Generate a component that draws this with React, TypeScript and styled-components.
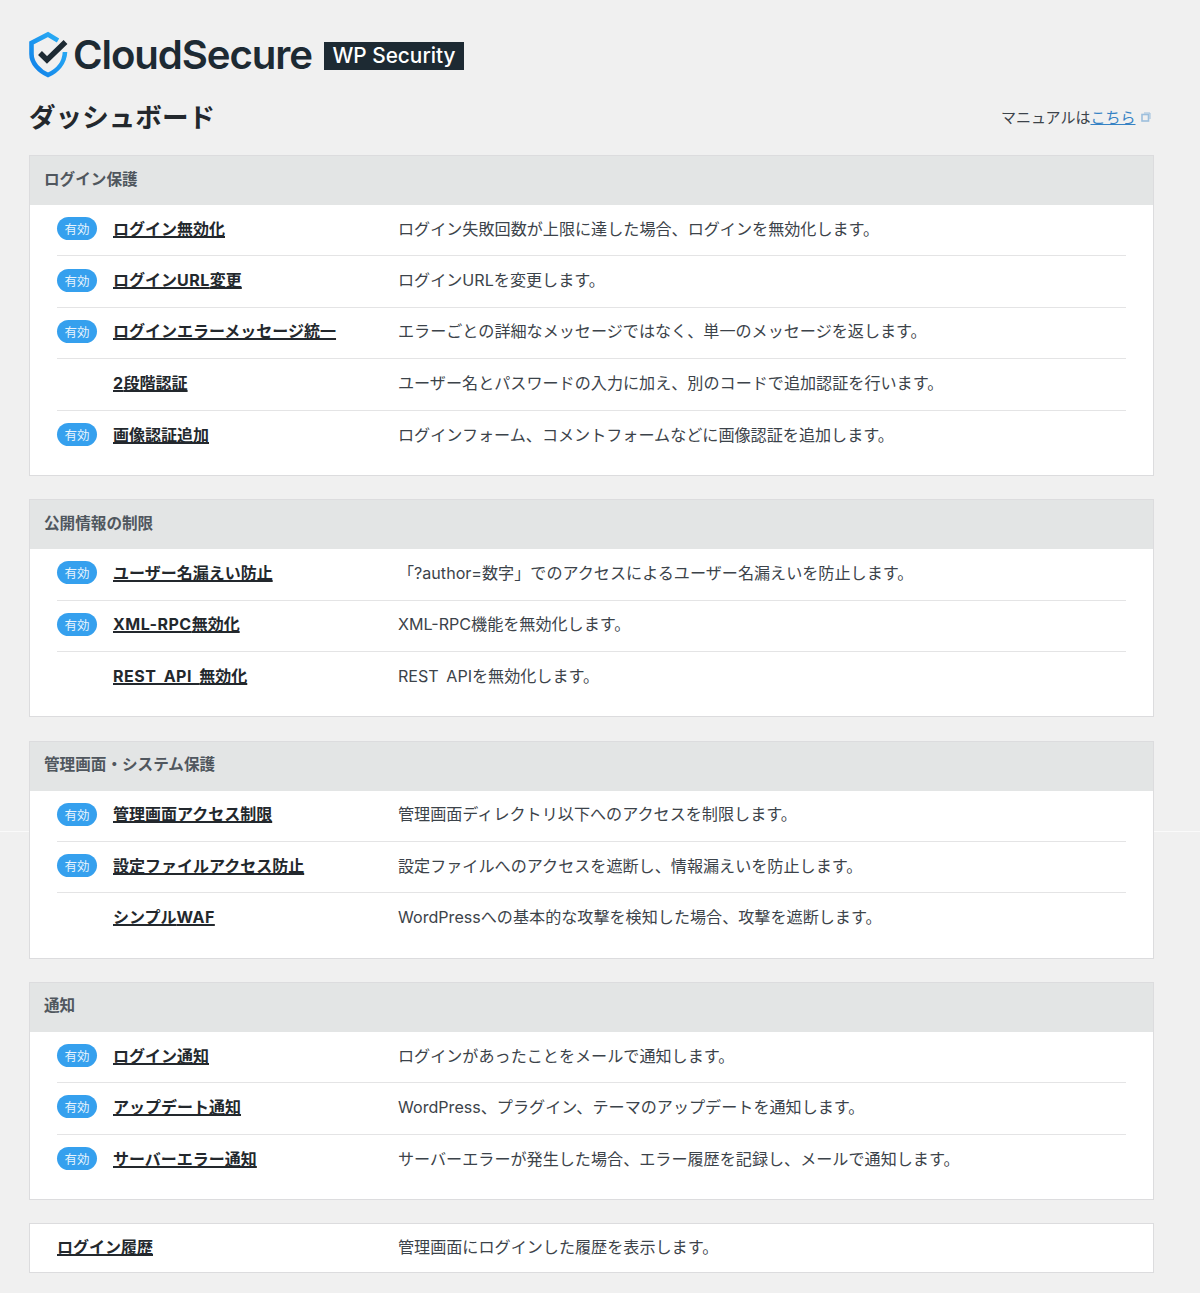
import React from "react";
import styled, { createGlobalStyle } from "styled-components";

const GlobalStyle = createGlobalStyle`
	html, body {
		margin: 0;
		padding: 0;
	}
	body {
		background-color: #f0f0f0;
		background-image: linear-gradient(#fafafa, #fafafa);
		background-size: 100% 1px;
		background-position: 0 831px;
		background-repeat: no-repeat;
		color: #2c3338;
		font-family: Inter, "Noto Sans CJK JP", sans-serif;
	}
`;

const Page = styled.div`
	box-sizing: border-box;
	width: 1200px;
	height: 1293px;
	padding: 30px 46px 0 29px;
	overflow: hidden;
`;

const LogoRow = styled.div`
	display: flex;
	align-items: center;
	height: 48px;
`;

const LogoName = styled.span`
	margin-left: 4px;
	font-family: Inter, sans-serif;
	font-size: 40.2px;
	font-weight: 600;
	letter-spacing: -1.1px;
	color: #1d2a33;
`;

const LogoTag = styled.span`
	display: flex;
	align-items: center;
	justify-content: center;
	width: 140px;
	height: 28px;
	margin-left: 12px;
	margin-top: 3px;
	background: #1d2a33;
	color: #fff;
	font-family: Inter, sans-serif;
	font-size: 20.8px;
	font-weight: 500;
`;

const TitleRow = styled.div`
	display: flex;
	align-items: center;
	justify-content: space-between;
	height: 40px;
	margin-top: 17px;
	margin-bottom: 20px;
`;

const Title = styled.h1`
	margin: 0;
	font-family: "Noto Sans CJK JP", sans-serif;
	font-size: 26.6px;
	font-weight: 700;
	color: #23282d;
`;

const Manual = styled.div`
	display: flex;
	align-items: center;
	margin-top: 2px;
	margin-right: 3.5px;
	font-family: "Noto Sans CJK JP", sans-serif;
	font-size: 15px;
	color: #3c434a;
`;

const ManualLink = styled.a`
	color: #3582c4;
	text-decoration: underline;
`;

const ExternalIcon = styled.svg`
	width: 10px;
	height: 10px;
	margin-left: 5px;
	margin-top: 2px;
`;

const Card = styled.section<{ $plain?: boolean }>`
	box-sizing: border-box;
	border: 1px solid #dcdcde;
	background: #fff;
	margin-bottom: 23.2px;
	padding-bottom: ${({ $plain }) => ($plain ? "0" : "13px")};
`;

const CardTitle = styled.h2`
	box-sizing: border-box;
	display: flex;
	align-items: center;
	height: 49px;
	margin: 0;
	padding: 0 14px 6px;
	background: #e3e5e5;
	font-family: "Noto Sans CJK JP", sans-serif;
	font-size: 15.6px;
	font-weight: 700;
	color: #50575e;
`;

const RowList = styled.div`
	padding: 0 27.5px 0 27px;
`;

const Row = styled.div<{ $plain?: boolean }>`
	box-sizing: border-box;
	display: flex;
	align-items: center;
	height: ${({ $plain }) => ($plain ? "48px" : "51.4px")};
	padding-bottom: 3px;
	border-bottom: 1px solid #e4e4e5;

	&:last-child {
		border-bottom: none;
	}
`;

const BadgeSlot = styled.div`
	flex: none;
	width: 56px;
`;

const Badge = styled.span`
	display: flex;
	align-items: center;
	justify-content: center;
	width: 40px;
	height: 23px;
	border-radius: 12px;
	background: #35a0ee;
	color: #e8f4fd;
	font-family: "Noto Sans CJK JP", sans-serif;
	font-size: 12.5px;
`;

const FeatureName = styled.a<{ $wide?: boolean }>`
	flex: none;
	width: ${({ $wide }) => ($wide ? "341px" : "285px")};
	padding-bottom: 2px;
	font-size: 16px;
	font-weight: 700;
	word-spacing: 3px;
	color: #23282d;
`;

const FeatureLabel = styled.span`
	text-decoration: underline;
	text-underline-offset: 2px;
`;

const LatinPart = styled.span`
	letter-spacing: 0.5px;
`;

const Description = styled.div`
	padding-bottom: 2px;
	font-size: 16.1px;
	word-spacing: 3px;
	color: #3c434a;
`;

type Feature = { name: string; text: string; active: boolean };
type Section = { title: string; items: Feature[] };

const sections: Section[] = [
	{
		title: "ログイン保護",
		items: [
			{ name: "ログイン無効化", text: "ログイン失敗回数が上限に達した場合、ログインを無効化します。", active: true },
			{ name: "ログインURL変更", text: "ログインURLを変更します。", active: true },
			{ name: "ログインエラーメッセージ統一", text: "エラーごとの詳細なメッセージではなく、単一のメッセージを返します。", active: true },
			{ name: "2段階認証", text: "ユーザー名とパスワードの入力に加え、別のコードで追加認証を行います。", active: false },
			{ name: "画像認証追加", text: "ログインフォーム、コメントフォームなどに画像認証を追加します。", active: true },
		],
	},
	{
		title: "公開情報の制限",
		items: [
			{ name: "ユーザー名漏えい防止", text: "「?author=数字」でのアクセスによるユーザー名漏えいを防止します。", active: true },
			{ name: "XML-RPC無効化", text: "XML-RPC機能を無効化します。", active: true },
			{ name: "REST API 無効化", text: "REST APIを無効化します。", active: false },
		],
	},
	{
		title: "管理画面・システム保護",
		items: [
			{ name: "管理画面アクセス制限", text: "管理画面ディレクトリ以下へのアクセスを制限します。", active: true },
			{ name: "設定ファイルアクセス防止", text: "設定ファイルへのアクセスを遮断し、情報漏えいを防止します。", active: true },
			{ name: "シンプルWAF", text: "WordPressへの基本的な攻撃を検知した場合、攻撃を遮断します。", active: false },
		],
	},
	{
		title: "通知",
		items: [
			{ name: "ログイン通知", text: "ログインがあったことをメールで通知します。", active: true },
			{ name: "アップデート通知", text: "WordPress、プラグイン、テーマのアップデートを通知します。", active: true },
			{ name: "サーバーエラー通知", text: "サーバーエラーが発生した場合、エラー履歴を記録し、メールで通知します。", active: true },
		],
	},
];

// latin runs in the names sit a little wider than the kana around them
const spaceLatin = (name: string) =>
	name.split(/([A-Za-z0-9 -]+)/).map((part, i) =>
		i % 2 === 1 ? <LatinPart key={i}>{part}</LatinPart> : part
	);

const ShieldLogo: React.FC = () => (
	<svg width="40" height="48" viewBox="0 0 40 48" aria-hidden="true">
		<defs>
			<linearGradient id="shield" x1="0" y1="1" x2="1" y2="0">
				<stop offset="0" stopColor="#0f7fe8" />
				<stop offset="1" stopColor="#2db2f6" />
			</linearGradient>
		</defs>
		<path
			d="M29 10.5 L19 4.5 L2.5 13 V24 C2.5 33 10 41 19 45 C28 41 35.5 33 36 22"
			fill="none"
			stroke="url(#shield)"
			strokeWidth="4.6"
		/>
		<path d="M11 23 L18 30 L36.5 12" fill="none" stroke="#1d2a33" strokeWidth="5.5" />
	</svg>
);

const FeatureRow: React.FC<{ item: Feature }> = ({ item }) => (
	<Row>
		<BadgeSlot>{item.active && <Badge>有効</Badge>}</BadgeSlot>
		<FeatureName href="#">
			<FeatureLabel>{spaceLatin(item.name)}</FeatureLabel>
		</FeatureName>
		<Description>{item.text}</Description>
	</Row>
);

const App: React.FC = () => (
	<Page>
		<GlobalStyle />
		<LogoRow>
			<ShieldLogo />
			<LogoName>CloudSecure</LogoName>
			<LogoTag>WP Security</LogoTag>
		</LogoRow>
		<TitleRow>
			<Title>ダッシュボード</Title>
			<Manual>
				マニュアルは<ManualLink href="#">こちら</ManualLink>
				<ExternalIcon viewBox="0 0 10 10" aria-hidden="true">
					<rect x="1" y="2.5" width="6.5" height="6.5" fill="none" stroke="#9dbfdd" strokeWidth="1.6" />
					<path d="M3 1 H9 V7" fill="none" stroke="#9dbfdd" strokeWidth="1" />
				</ExternalIcon>
			</Manual>
		</TitleRow>
		{sections.map((section) => (
			<Card key={section.title}>
				<CardTitle>{section.title}</CardTitle>
				<RowList>
					{section.items.map((item) => (
						<FeatureRow key={item.name} item={item} />
					))}
				</RowList>
			</Card>
		))}
		<Card $plain>
			<RowList>
				<Row $plain>
					<FeatureName href="#" $wide>
						<FeatureLabel>ログイン履歴</FeatureLabel>
					</FeatureName>
					<Description>管理画面にログインした履歴を表示します。</Description>
				</Row>
			</RowList>
		</Card>
	</Page>
);

export default App;
